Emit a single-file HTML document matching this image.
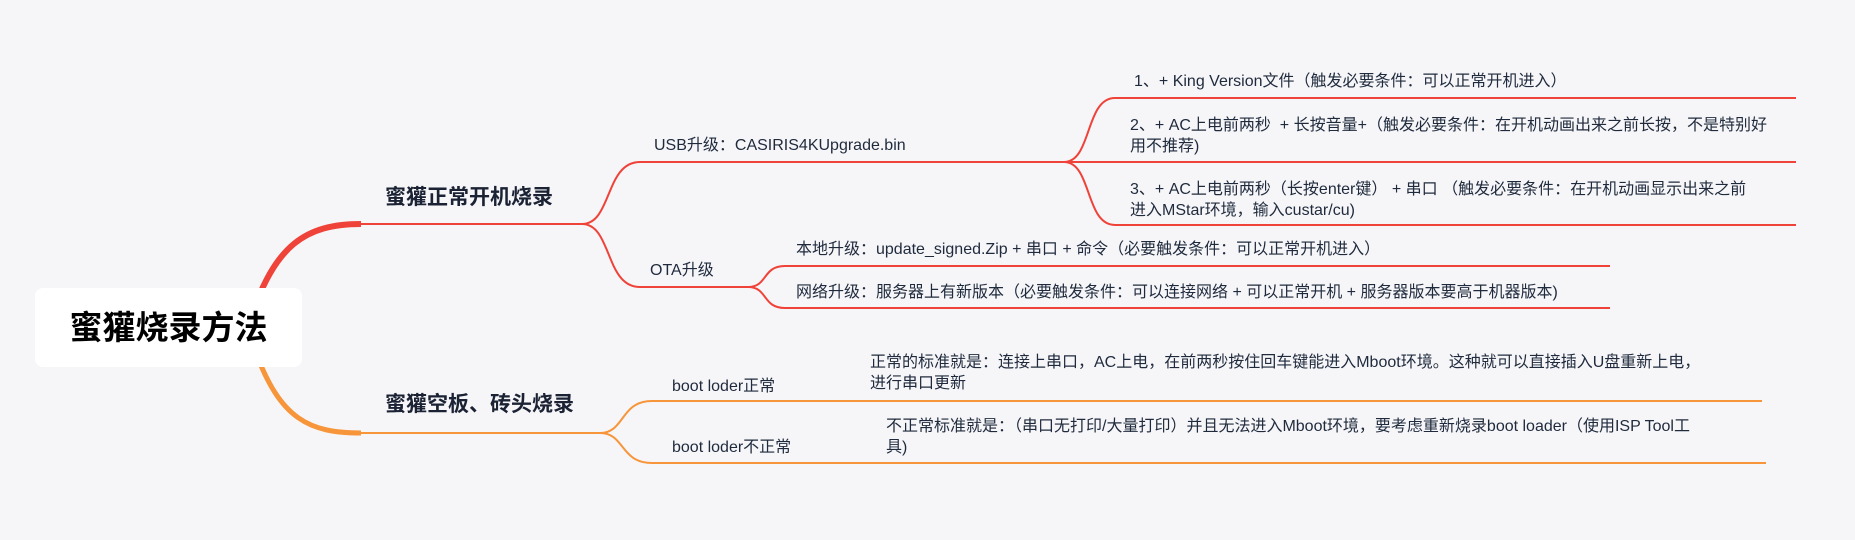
<!DOCTYPE html>
<html><head><meta charset="utf-8"><style>
html,body{margin:0;padding:0;}
body{width:1855px;height:540px;background:#f6f6f9;position:relative;overflow:hidden;font-family:"Liberation Sans","Noto Sans CJK SC",sans-serif;color:#1f2a3c;}
.t{position:absolute;font-size:16px;line-height:21px;white-space:nowrap;}
.b{position:absolute;font-size:21px;font-weight:bold;line-height:26px;white-space:nowrap;color:#1a2233;}
svg{position:absolute;left:0;top:0;}
#root{position:absolute;left:35px;top:288px;width:267px;height:79px;background:#fff;border-radius:8px;font-size:33px;font-weight:bold;color:#000;line-height:79px;text-align:center;}
</style></head><body>
<svg width="1855" height="540" fill="none">
<g stroke="#ef4238" stroke-width="2">
<path d="M250,320 C275,245 305,224 361,224" stroke-width="6"/>
<path d="M358,224 H582"/>
<path d="M582,224 C612,224 605,162 640,162 H1064"/>
<path d="M582,224 C612,224 605,287 640,287 H748"/>
<path d="M1064,162 C1092,162 1085,98 1115,98 H1796"/>
<path d="M1064,162 H1796"/>
<path d="M1064,162 C1092,162 1085,225 1115,225 H1796"/>
<path d="M748,287 C768,287 762,266 785,266 H1610"/>
<path d="M748,287 C768,287 762,308 785,308 H1610"/>
</g>
<g stroke="#f7953a" stroke-width="2">
<path d="M255,350 C280,420 310,433 361,433" stroke-width="5"/>
<path d="M358,433 H600"/>
<path d="M600,433 C625,433 620,401 652,401 H1762"/>
<path d="M600,433 C625,433 620,463 652,463 H1766"/>
</g>
</svg>
<div id="root">蜜獾烧录方法</div>
<div class="b" style="left:385px;top:185px">蜜獾正常开机烧录</div>
<div class="b" style="left:385px;top:392px">蜜獾空板、砖头烧录</div>
<div class="t" style="left:654px;top:135px">USB升级：CASIRIS4KUpgrade.bin</div>
<div class="t" style="left:650px;top:260px">OTA升级</div>
<div class="t" style="left:1134px;top:71px">1、+ King Version文件（触发必要条件：可以正常开机进入）</div>
<div class="t" style="left:1130px;top:115px">2、+ AC上电前两秒&nbsp; + 长按音量+（触发必要条件：在开机动画出来之前长按，不是特别好<br>用不推荐)</div>
<div class="t" style="left:1130px;top:179px">3、+ AC上电前两秒（长按enter键） + 串口 （触发必要条件：在开机动画显示出来之前<br>进入MStar环境，输入custar/cu)</div>
<div class="t" style="left:796px;top:239px">本地升级：update_signed.Zip + 串口 + 命令（必要触发条件：可以正常开机进入）</div>
<div class="t" style="left:796px;top:282px">网络升级：服务器上有新版本（必要触发条件：可以连接网络 + 可以正常开机 + 服务器版本要高于机器版本)</div>
<div class="t" style="left:672px;top:376px">boot loder正常</div>
<div class="t" style="left:672px;top:437px">boot loder不正常</div>
<div class="t" style="left:870px;top:352px">正常的标准就是：连接上串口，AC上电，在前两秒按住回车键能进入Mboot环境。这种就可以直接插入U盘重新上电，<br>进行串口更新</div>
<div class="t" style="left:886px;top:416px">不正常标准就是：（串口无打印/大量打印）并且无法进入Mboot环境，要考虑重新烧录boot loader（使用ISP Tool工<br>具)</div>
</body></html>
